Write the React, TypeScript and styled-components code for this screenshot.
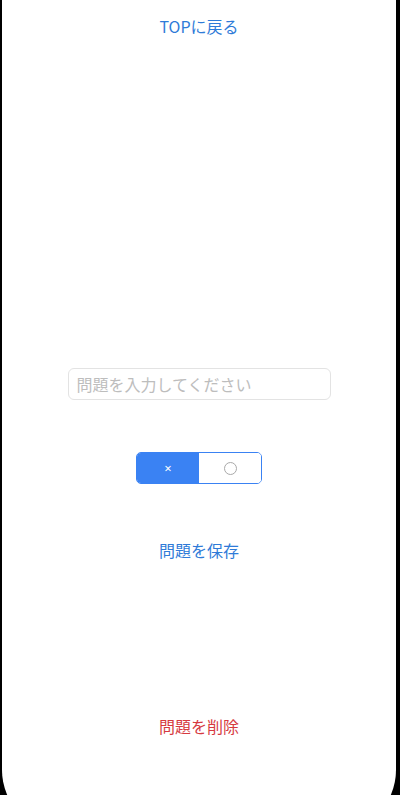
import React from "react";
import styled, { createGlobalStyle } from "styled-components";

const Global = createGlobalStyle`
  html, body {
    margin: 0;
    padding: 0;
    background: #000;
    height: 795px;
    overflow: hidden;
  }
  body {
    font-family: "Noto Sans", "Noto Sans CJK JP", sans-serif;
  }
`;

const Panel = styled.div`
  margin: 0 4px 0 2px;
  height: 832px;
  background: #fff;
  border-radius: 0 0 62px 62px;
  display: flex;
  flex-direction: column;
  align-items: center;
`;

const LinkButton = styled.button<{ $tone: "blue" | "red"; $top: number }>`
  margin-top: ${(p) => p.$top}px;
  border: none;
  background: transparent;
  padding: 0;
  font-family: "Noto Sans CJK JP", sans-serif;
  font-size: 16px;
  line-height: 20px;
  color: ${(p) => (p.$tone === "red" ? "#d63a3f" : "#2f7bd8")};
  cursor: pointer;
`;

const QuestionInput = styled.input`
  margin-top: 332px;
  box-sizing: border-box;
  width: 263px;
  height: 32px;
  border: 1px solid #e3e3e3;
  border-radius: 6px;
  padding: 0 8px;
  font-family: "Noto Sans CJK JP", sans-serif;
  font-size: 16px;
  color: #333;
  outline: none;
  &::placeholder {
    color: #bdbdbd;
  }
`;

const Toggle = styled.div`
  margin-top: 52px;
  display: flex;
  width: 126px;
  height: 32px;
  box-sizing: border-box;
  border: 1px solid #3a82f3;
  border-radius: 5px;
  overflow: hidden;
`;

const Segment = styled.button<{ $active: boolean }>`
  flex: 1;
  border: none;
  margin: 0;
  padding: 0;
  display: flex;
  align-items: center;
  justify-content: center;
  background: ${(p) => (p.$active ? "#3a82f3" : "#fff")};
  color: ${(p) => (p.$active ? "#fff" : "#aaa")};
  font-family: "Noto Sans", sans-serif;
  font-size: 13px;
  cursor: pointer;
`;

const Ring = styled.span`
  display: block;
  width: 11px;
  height: 11px;
  border: 1px solid #a9a9a9;
  border-radius: 50%;
`;

export default function App() {
  return (
    <>
      <Global />
      <Panel>
        <LinkButton $tone="blue" $top={16}>TOPに戻る</LinkButton>
        <QuestionInput placeholder="問題を入力してください" />
        <Toggle>
          <Segment $active>×</Segment>
          <Segment $active={false}>
            <Ring />
          </Segment>
        </Toggle>
        <LinkButton $tone="blue" $top={56}>問題を保存</LinkButton>
        <LinkButton $tone="red" $top={156}>問題を削除</LinkButton>
      </Panel>
    </>
  );
}
